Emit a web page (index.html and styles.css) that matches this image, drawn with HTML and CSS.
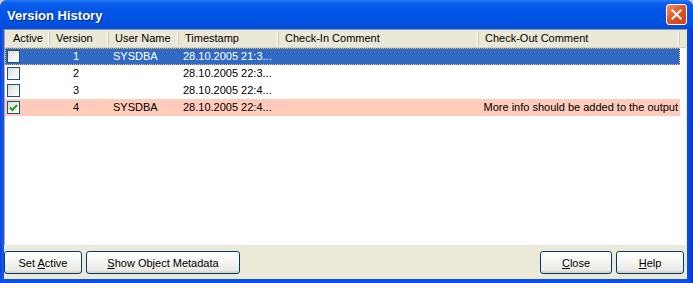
FILE: index.html
```html
<!DOCTYPE html>
<html lang="en">
<head>
    <meta charset="UTF-8">
    <title>Version History</title>
    <link rel="stylesheet" href="styles.css">
</head>
<body>
    <div class="window">
        <div class="titlebar">
            <span class="title">Version History</span>
            <button type="button" class="closeX" aria-label="Close">
                <svg width="11" height="11" viewBox="0 0 11 11"><path d="M1.5 1.5 L9.5 9.5 M9.5 1.5 L1.5 9.5" stroke="#fff" stroke-width="2" stroke-linecap="square"/></svg>
            </button>
        </div>
        <div class="client">
            <div class="list">
                <div class="head">
                    <span class="hcell">Active</span>
                    <span class="hcell">Version</span>
                    <span class="hcell">User Name</span>
                    <span class="hcell">Timestamp</span>
                    <span class="hcell">Check-In Comment</span>
                    <span class="hcell">Check-Out Comment</span>
                </div>
                <div class="row selected">
                    <span class="cell"><span class="check"></span></span>
                    <span class="cell num">1</span>
                    <span class="cell">SYSDBA</span>
                    <span class="cell">28.10.2005 21:3...</span>
                    <span class="cell"></span>
                    <span class="cell"></span>
                </div>
                <div class="row">
                    <span class="cell"><span class="check"></span></span>
                    <span class="cell num">2</span>
                    <span class="cell"></span>
                    <span class="cell">28.10.2005 22:3...</span>
                    <span class="cell"></span>
                    <span class="cell"></span>
                </div>
                <div class="row">
                    <span class="cell"><span class="check"></span></span>
                    <span class="cell num">3</span>
                    <span class="cell"></span>
                    <span class="cell">28.10.2005 22:4...</span>
                    <span class="cell"></span>
                    <span class="cell"></span>
                </div>
                <div class="row active">
                    <span class="cell"><span class="check on"><svg width="11" height="11" viewBox="0 0 11 11"><path d="M2 5.5 L4.5 8 L9 3" fill="none" stroke="#21a121" stroke-width="2"/></svg></span></span>
                    <span class="cell num">4</span>
                    <span class="cell">SYSDBA</span>
                    <span class="cell">28.10.2005 22:4...</span>
                    <span class="cell"></span>
                    <span class="cell right">More info should be added to the output</span>
                </div>
            </div>
            <div class="buttons">
                <button type="button" class="btn setActive">Set <u>A</u>ctive</button>
                <button type="button" class="btn meta"><u>S</u>how Object Metadata</button>
                <span class="spacer"></span>
                <button type="button" class="btn close"><u>C</u>lose</button>
                <button type="button" class="btn help"><u>H</u>elp</button>
            </div>
        </div>
    </div>
</body>
</html>
```

FILE: styles.css
```css
body{
    margin: 0;
    font-family: "Liberation Sans", Arial, sans-serif;
    font-size: 11px;
    background-color: #d4d0c8;
}
.window{
    width: 693px;
    height: 283px;
    display: flex;
    flex-direction: column;
    border-radius: 7px 7px 0 0;
    overflow: hidden;
    background: linear-gradient(to right, #0842d6 0px, #1a5cf0 3px, #0c4fe6 4px, #0c4fe6 687px, #0638c8 693px);
}
.titlebar{
    height: 29px;
    display: flex;
    align-items: center;
    padding-left: 7px;
    padding-right: 6px;
    background: linear-gradient(to bottom, #2a7df6 0px, #0a5fec 3px, #0356e6 10px, #0054e3 18px, #0250de 26px, #0a46d0 29px);
}
.title{
    color: #ffffff;
    font-weight: bold;
    font-size: 13px;
    text-shadow: 1px 1px 0 #0a2a8a;
    flex: 1;
    padding-top: 1px;
}
.closeX{
    width: 21px;
    height: 21px;
    padding: 0;
    border: 1px solid #ffffff;
    border-radius: 3px;
    background: linear-gradient(135deg, #f0906a 0%, #e2582c 45%, #c8401a 100%);
    display: flex;
    align-items: center;
    justify-content: center;
}
.client{
    flex: 1;
    display: flex;
    flex-direction: column;
    margin: 0 6px 4px 4px;
    background-color: #ece9d8;
}
.list{
    flex: 1;
    background-color: #ffffff;
    border-top: 1px solid #7f9db9;
    border-left: 1px solid #aca899;
    margin-right: 1px;
}
.head{
    height: 17px;
    display: grid;
    grid-template-columns: 45px 59px 70px 100px 200px 201px;
    background-color: #ebe8d7;
    border-bottom: 1px solid #d6d2c2;
}
.hcell{
    color: #000000;
    padding-left: 6px;
    border-right: 1px solid #c7c5b2;
    box-shadow: inset -2px 0 0 -1px #ffffff;
    height: 13px;
    line-height: 13px;
    margin-top: 2px;
    white-space: nowrap;
}
.hcell:first-child{
    padding-left: 8px;
}
.row{
    height: 17px;
    display: grid;
    grid-template-columns: 45px 59px 70px 100px 200px 201px;
    width: 675px;
    box-sizing: border-box;
}
.cell{
    line-height: 17px;
    padding-left: 4px;
    white-space: nowrap;
    overflow: hidden;
    color: #000000;
}
.cell:first-child{
    display: flex;
    align-items: center;
    padding-left: 2px;
}
.num{
    text-align: center;
    padding-left: 0;
    padding-right: 7px;
}
.right{
    text-align: right;
    padding-right: 2px;
}
.selected{
    background-color: #316ac5;
    outline: 1px dotted #f5b640;
    outline-offset: -1px;
}
.selected .cell{
    color: #ffffff;
}
.active{
    background-color: #ffccbc;
}
.check{
    width: 11px;
    height: 11px;
    border: 1px solid #1c5180;
    background: linear-gradient(135deg, #dcdcd6 0%, #f4f4f0 60%, #ffffff 100%);
    display: flex;
    align-items: center;
    justify-content: center;
}
.buttons{
    height: 33px;
    display: flex;
    align-items: center;
    gap: 4px;
    padding-top: 1px;
}
.spacer{
    flex: 1;
}
.btn{
    height: 23px;
    font-family: "Liberation Sans", Arial, sans-serif;
    font-size: 11px;
    color: #000000;
    border: 1px solid #003c74;
    border-radius: 3px;
    background: linear-gradient(to bottom, #ffffff 0%, #f4f4f0 50%, #ecebe6 85%, #d6d0c5 100%);
    padding: 0;
}
.setActive{
    width: 78px;
}
.meta{
    width: 154px;
}
.close{
    width: 72px;
}
.help{
    width: 68px;
    margin-right: 3px;
}
```
